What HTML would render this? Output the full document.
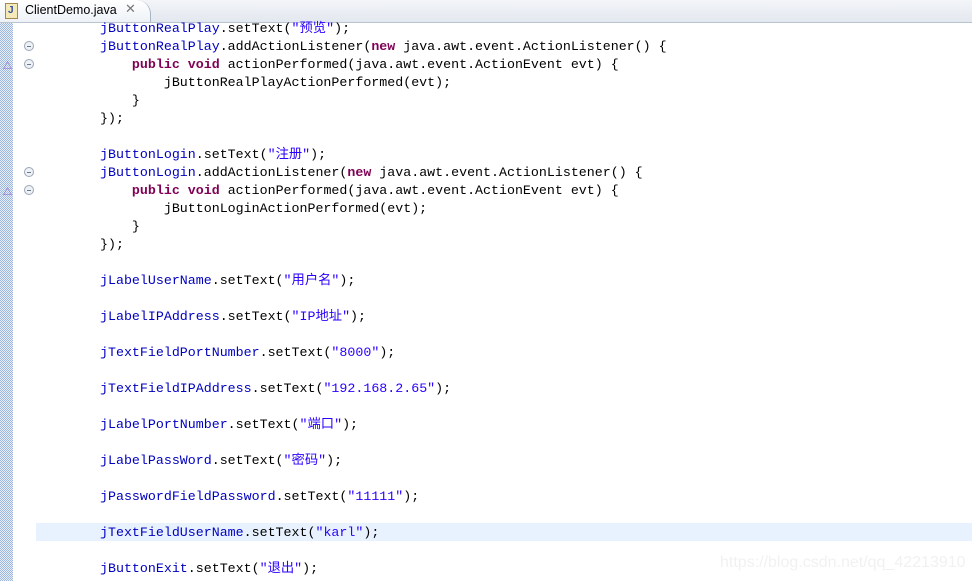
<!DOCTYPE html>
<html><head><meta charset="utf-8"><style>
body{margin:0;width:972px;height:581px;overflow:hidden;background:#fff;position:relative;font-family:"Liberation Mono","Noto Sans CJK SC",monospace}
.tabbar{position:absolute;left:0;top:0;width:972px;height:22px;background:linear-gradient(#f3f5f8,#e3e8ef);border-bottom:1px solid #b8c4d2}
.tab{position:absolute;left:0;top:0;width:150px;height:22px;background:linear-gradient(#fff,#eef2f7);border-right:1px solid #a9b6c6;border-top-right-radius:14px;font-family:"Liberation Sans",sans-serif;font-size:12.5px;color:#000}
.gut{position:absolute;left:0;top:23px;width:13px;height:558px;background-color:#c8d8ee;background-image:repeating-conic-gradient(#9db8dc 0 25%,#e6eefa 0 50%);background-size:2px 2px}
.ln{position:absolute;left:0;height:18px;line-height:18px;font-size:13.3px;white-space:pre;color:#000}
.i{color:#0000c0}.s{color:#2a00ff}.k{color:#7f0055;font-weight:bold}
.fold{position:absolute;left:24px;width:8px;height:8px;border:1px solid #9aa7b8;border-radius:50%;background:#eef1f5}
.fold:after{content:"";position:absolute;left:2px;top:4px;width:4px;height:1px;background:#6a7a8e}
</style></head><body>
<div class="tabbar"><div class="tab">
<div style="position:absolute;left:5px;top:3px;width:11px;height:14px;border:1px solid #a08a50;background:#f6e9b8"></div>
<div style="position:absolute;left:8px;top:5px;font-size:10px;color:#3050a0;font-weight:bold">J</div>
<span style="position:absolute;left:25px;top:3px">ClientDemo.java</span>
<span style="position:absolute;left:125px;top:1px;color:#777;font-size:13px">✕</span>
</div></div>
<div class="gut"></div>
<div style="position:absolute;left:36px;top:523px;width:936px;height:18px;background:#e8f2fe"></div>
<div class="fold" style="top:41px"></div><div class="fold" style="top:59px"></div>
<div class="fold" style="top:167px"></div><div class="fold" style="top:185px"></div>
<div style="position:absolute;left:3px;top:59px;color:#8040c0;font-size:9px">△</div>
<div style="position:absolute;left:3px;top:185px;color:#8040c0;font-size:9px">△</div>
<div style="position:absolute;left:100px;top:20px">
<div class="ln" style="top:0"><span class="i">jButtonRealPlay</span>.setText(<span class="s">"预览"</span>);</div>
<div class="ln" style="top:18px"><span class="i">jButtonRealPlay</span>.addActionListener(<span class="k">new</span> java.awt.event.ActionListener() {</div>
<div class="ln" style="top:36px">    <span class="k">public</span> <span class="k">void</span> actionPerformed(java.awt.event.ActionEvent evt) {</div>
<div class="ln" style="top:54px">        jButtonRealPlayActionPerformed(evt);</div>
<div class="ln" style="top:72px">    }</div>
<div class="ln" style="top:90px">});</div>
<div class="ln" style="top:126px"><span class="i">jButtonLogin</span>.setText(<span class="s">"注册"</span>);</div>
<div class="ln" style="top:144px"><span class="i">jButtonLogin</span>.addActionListener(<span class="k">new</span> java.awt.event.ActionListener() {</div>
<div class="ln" style="top:162px">    <span class="k">public</span> <span class="k">void</span> actionPerformed(java.awt.event.ActionEvent evt) {</div>
<div class="ln" style="top:180px">        jButtonLoginActionPerformed(evt);</div>
<div class="ln" style="top:198px">    }</div>
<div class="ln" style="top:216px">});</div>
<div class="ln" style="top:252px"><span class="i">jLabelUserName</span>.setText(<span class="s">"用户名"</span>);</div>
<div class="ln" style="top:288px"><span class="i">jLabelIPAddress</span>.setText(<span class="s">"IP地址"</span>);</div>
<div class="ln" style="top:324px"><span class="i">jTextFieldPortNumber</span>.setText(<span class="s">"8000"</span>);</div>
<div class="ln" style="top:360px"><span class="i">jTextFieldIPAddress</span>.setText(<span class="s">"192.168.2.65"</span>);</div>
<div class="ln" style="top:396px"><span class="i">jLabelPortNumber</span>.setText(<span class="s">"端口"</span>);</div>
<div class="ln" style="top:432px"><span class="i">jLabelPassWord</span>.setText(<span class="s">"密码"</span>);</div>
<div class="ln" style="top:468px"><span class="i">jPasswordFieldPassword</span>.setText(<span class="s">"11111"</span>);</div>
<div class="ln" style="top:504px"><span class="i">jTextFieldUserName</span>.setText(<span class="s">"karl"</span>);</div>
<div class="ln" style="top:540px"><span class="i">jButtonExit</span>.setText(<span class="s">"退出"</span>);</div>
</div>
<div style="position:absolute;left:720px;top:554px;font-family:'Liberation Sans',sans-serif;font-size:16px;color:#f1f1f1">https://blog.csdn.net/qq_42213910</div>
</body></html>
